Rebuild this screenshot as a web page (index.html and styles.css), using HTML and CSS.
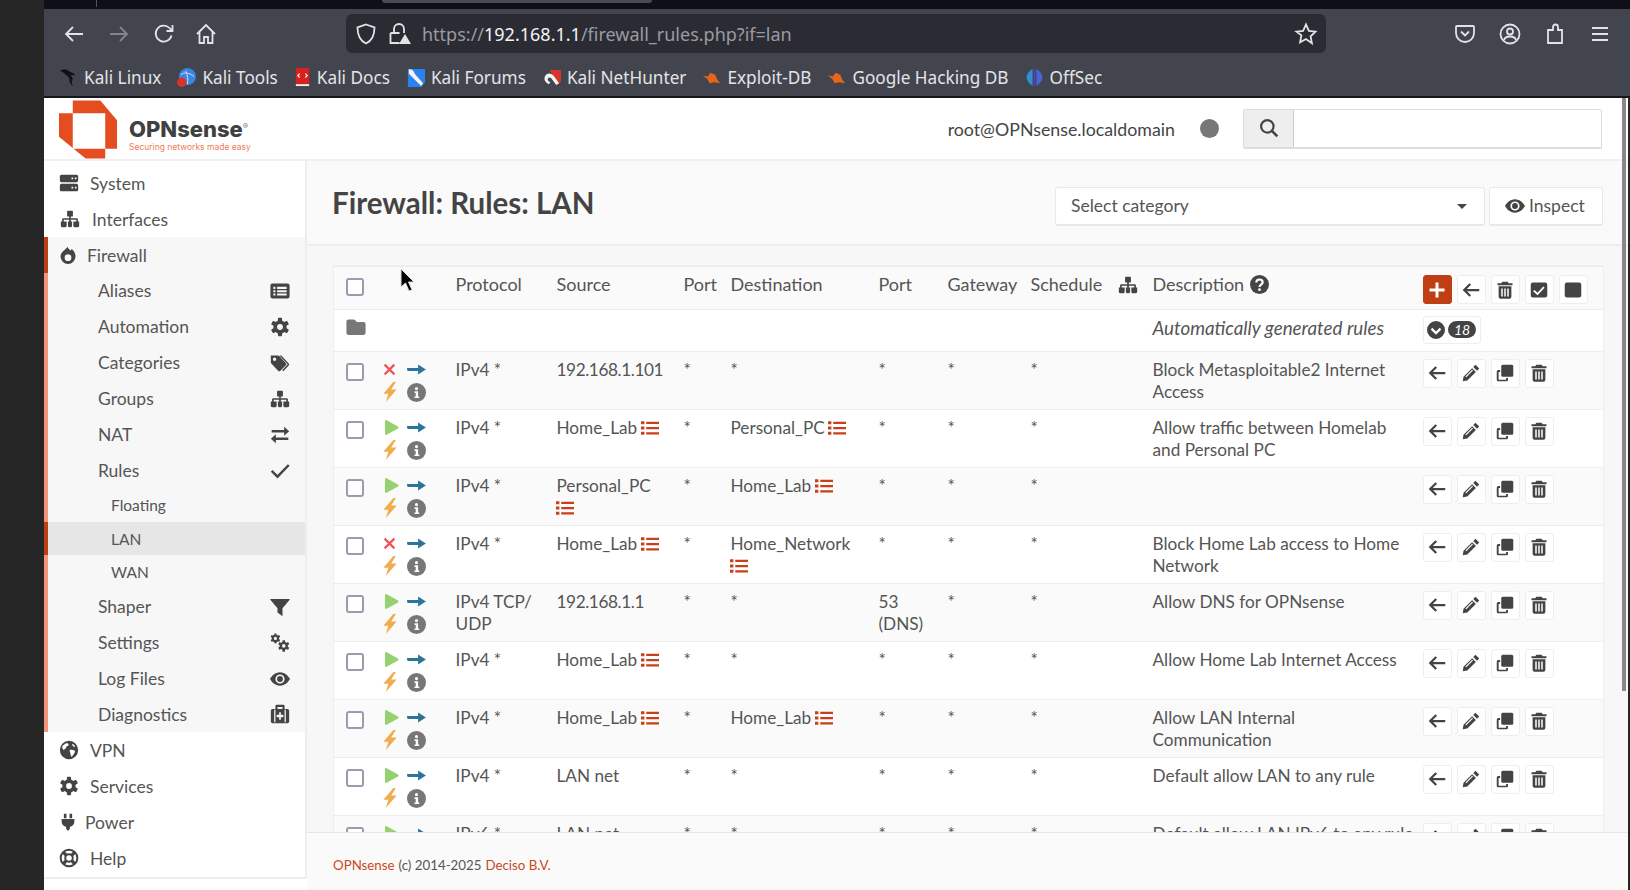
FILE: index.html
```html
<!DOCTYPE html>
<html lang="en">
<head>
  <meta charset="UTF-8">
  <title>Firewall: Rules: LAN</title>
  <link rel="stylesheet" href="styles.css">
</head>
<body>
  <!-- icon sprite -->
  <svg class="sprite" xmlns="http://www.w3.org/2000/svg">
    <symbol id="cog" viewBox="0 0 24 24">
      <path fill-rule="evenodd" d="M12 4a8 8 0 1 0 0 16a8 8 0 1 0 0-16zM12 8.500a3.500 3.500 0 1 1 0 7a3.500 3.500 0 1 1 0-7z"/>
      <rect x="9.500" y="1" width="5" height="5" rx="1"/><rect x="9.500" y="18" width="5" height="5" rx="1"/>
      <rect x="9.500" y="1" width="5" height="5" rx="1" transform="rotate(60 12 12)"/><rect x="9.500" y="18" width="5" height="5" rx="1" transform="rotate(60 12 12)"/>
      <rect x="9.500" y="1" width="5" height="5" rx="1" transform="rotate(120 12 12)"/><rect x="9.500" y="18" width="5" height="5" rx="1" transform="rotate(120 12 12)"/>
    </symbol>
    <symbol id="cogs" viewBox="0 0 24 24">
      <use href="#cog" x="0" y="0" width="13" height="13"/>
      <use href="#cog" x="9" y="8" width="15" height="15"/>
    </symbol>
    <symbol id="server" viewBox="0 0 24 24"><path fill-rule="evenodd" d="M3 2h18a2 2 0 0 1 2 2v5a2 2 0 0 1-2 2H3a2 2 0 0 1-2-2V4a2 2 0 0 1 2-2zM15 5.500v2h2v-2zM19 5.500v2h2v-2zM3 13h18a2 2 0 0 1 2 2v5a2 2 0 0 1-2 2H3a2 2 0 0 1-2-2v-5a2 2 0 0 1 2-2zM15 16.500v2h2v-2zM19 16.500v2h2v-2z"/></symbol>
    <symbol id="sitemap" viewBox="0 0 24 24"><path d="M9.500 2h5a1 1 0 0 1 1 1v5a1 1 0 0 1-1 1H13v2h7a1.500 1.500 0 0 1 1.500 1.500V15H23v5a2 2 0 0 1-2 2h-3a2 2 0 0 1-2-2v-5h3.500v-2H13v2h1.500v5a2 2 0 0 1-2 2h-1a2 2 0 0 1-2-2v-5H11v-2H4.500v2H8v5a2 2 0 0 1-2 2H3a2 2 0 0 1-2-2v-5h1.500v-2.500A1.500 1.500 0 0 1 4 11h7V9H9.500a1 1 0 0 1-1-1V3a1 1 0 0 1 1-1z"/></symbol>
    <symbol id="fire" viewBox="0 0 24 24"><path fill-rule="evenodd" d="M11 1c1.500 2.500 3 3.500 4.500 5l1.500-2c3 2.500 5 6 5 10a10 10 0 0 1-20 0c0-4.500 3-6.500 5-8.500 2-2 3.500-2.500 4-4.500zM12 11a4.500 4.500 0 1 0 0 9a4.500 4.500 0 1 0 0-9z"/></symbol>
    <symbol id="list-alt" viewBox="0 0 24 24"><path fill-rule="evenodd" d="M3 3h18a2.500 2.500 0 0 1 2.500 2.500v13a2.500 2.500 0 0 1-2.500 2.500H3a2.500 2.500 0 0 1-2.500-2.500v-13A2.500 2.500 0 0 1 3 3zM4 7v2.500h2.500V7zM8.500 7v2.500H20V7zM4 11v2.500h2.500V11zM8.500 11v2.500H20V11zM4 15v2.500h2.500V15zM8.500 15v2.500H20V15z"/></symbol>
    <symbol id="tags" viewBox="0 0 24 24"><path fill-rule="evenodd" d="M1 3h8.500a2 2 0 0 1 1.500.6l8 8.400a2 2 0 0 1 0 2.800l-6.500 6.500a2 2 0 0 1-2.800 0L1.600 12.500A2 2 0 0 1 1 11zM5.500 5.500a2 2 0 1 0 0 4a2 2 0 1 0 0-4z"/><path d="M13.500 3l9 9.500a2 2 0 0 1 0 2.500l-6.500 7-1.300-1.300 6-6.500c.4-.5.4-.8 0-1.300l-9.500-9.900z"/></symbol>
    <symbol id="exchange" viewBox="0 0 24 24"><path d="M17 2l6 5.500-6 5.500V9H2V6h15zM7 11v4h15v3H7v4l-6-5.500z"/></symbol>
    <symbol id="check" viewBox="0 0 24 24"><path d="M2 13l7 7L22.500 6" fill="none" stroke="currentColor" stroke-width="3"/></symbol>
    <symbol id="filter" viewBox="0 0 24 24"><path d="M1 2.500h22c.6 0 .8.700.4 1.200L15 13.500V23l-6-4.500v-5L.6 3.700C.2 3.200.4 2.500 1 2.500z"/></symbol>
    <symbol id="eye" viewBox="0 0 24 24"><path fill-rule="evenodd" d="M12 4C6 4 2 8.500 0 12c2 3.500 6 8 12 8s10-4.500 12-8c-2-3.500-6-8-12-8zM12 6.500a5.500 5.500 0 1 1 0 11a5.500 5.500 0 1 1 0-11zM12 8.500a3.500 3.500 0 1 0 0 7a3.500 3.500 0 1 0 0-7z"/></symbol>
    <symbol id="medkit" viewBox="0 0 24 24"><path fill-rule="evenodd" d="M8 1h8a1.500 1.500 0 0 1 1.500 1.500V6H21a2 2 0 0 1 2 2v13a2 2 0 0 1-2 2H3a2 2 0 0 1-2-2V8a2 2 0 0 1 2-2h3.500V2.500A1.500 1.500 0 0 1 8 1zM9 3.500V6h6V3.500zM5 7v15h1.500V7zM17.500 7v15H19V7zM11 10v3H8v3h3v3h2v-3h3v-3h-3v-3z"/></symbol>
    <symbol id="globe" viewBox="0 0 24 24"><path fill-rule="evenodd" d="M12 1a11 11 0 1 0 0 22a11 11 0 1 0 0-22zM4 7c2-1 3-3 6-3.500.5 1 2 1 1.500 2.500C11 7.500 9 7 8.500 9c-.5 1.500-2 2-3 3-1-1-2-3-1.500-5zM13 12c2-1 4 0 6 1 .5 1.500-.5 3-1.500 4s-1 2.500-2.500 3c-1-1-1-3-1.500-4.500S12.500 13 13 12zM16 4.500c1.500.5 3 2 3.500 3.500-1 .5-2.500 0-3-1s-1-2 -.5-2.500z"/></symbol>
    <symbol id="plug" viewBox="0 0 24 24"><path d="M6.500 1h3.500v6H6.500zM14 1h3.500v6H14zM3.500 8h17v3.500c0 3.500-2.500 6-6 6.800V21L12 24l-2.500-3v-2.700c-3.500-.8-6-3.300-6-6.800z"/></symbol>
    <symbol id="lifering" viewBox="0 0 24 24"><g fill="none" stroke="currentColor"><circle cx="12" cy="12" r="10" stroke-width="2.400"/><circle cx="12" cy="12" r="4.500" stroke-width="2.400"/><path d="M5 5l3.800 3.800M19 5l-3.800 3.800M5 19l3.800-3.800M19 19l-3.800-3.800" stroke-width="4"/></g></symbol>
    <symbol id="search" viewBox="0 0 24 24"><g fill="none" stroke="currentColor" stroke-width="2.600"><circle cx="10" cy="10" r="7.500"/><path d="M15.500 15.500L22 22" stroke-width="3.200"/></g></symbol>
    <symbol id="x" viewBox="0 0 24 24"><path d="M3 3l18 18M21 3L3 21" fill="none" stroke="currentColor" stroke-width="4"/></symbol>
    <symbol id="play" viewBox="0 0 24 24"><path d="M3 2.500c0-1.500 1.500-2 2.500-1.500l17 9.500c1.300.7 1.300 2.300 0 3L5.500 23C4.500 23.500 3 23 3 21.500z"/></symbol>
    <symbol id="arrow" viewBox="0 0 24 14"><path d="M0 5h14V.5L24 7l-10 6.500V9H2a2 2 0 0 1-2-2z"/></symbol>
    <symbol id="bolt" viewBox="0 0 16 24"><path d="M12 0L0 14h6L3 24 16 9H9.500L15 0z"/></symbol>
    <symbol id="info" viewBox="0 0 24 24"><path fill-rule="evenodd" d="M12 0a12 12 0 1 0 0 24a12 12 0 1 0 0-24zM12 5a2 2 0 1 1 0 4a2 2 0 1 1 0-4zM9.500 10.500H14v6.500h1.500v2h-6v-2H11v-4.500H9.500z"/></symbol>
    <symbol id="list" viewBox="0 0 24 24"><path d="M0 3h4.500v4H0zM7 3.500h17v3H7zM0 10h4.500v4H0zM7 10.500h17v3H7zM0 17h4.500v4H0zM7 17.500h17v3H7z"/></symbol>
    <symbol id="folder" viewBox="0 0 24 24"><path d="M3 3h6c1 0 1.500.5 2 1l2 2h8a2.500 2.500 0 0 1 2.500 2.500V19a2.500 2.500 0 0 1-2.500 2.500H3A2.500 2.500 0 0 1 .5 19V5.500A2.500 2.500 0 0 1 3 3z"/></symbol>
    <symbol id="back" viewBox="0 0 24 24"><path d="M23 12H4M11 4l-8 8 8 8" fill="none" stroke="currentColor" stroke-width="3"/></symbol>
    <symbol id="pencil" viewBox="0 0 24 24"><path d="M18 1l5 5-3 3-5-5zM13.500 5.500l5 5L7 22l-6 1 1-6zM4.500 16.500l1.200 1.200 9-9-1.200-1.200z" fill-rule="evenodd"/></symbol>
    <symbol id="clone" viewBox="0 0 24 24"><path d="M9 1h12a2 2 0 0 1 2 2v12a2 2 0 0 1-2 2H9a2 2 0 0 1-2-2V3a2 2 0 0 1 2-2z"/><path d="M5.500 8H3a2 2 0 0 0-2 2v11a2 2 0 0 0 2 2h11a2 2 0 0 0 2-2v-2.500h-2.500V21h-10V10.500h2z"/></symbol>
    <symbol id="trash" viewBox="0 0 24 24"><path fill-rule="evenodd" d="M8.500 1h7l1.500 2h5v2.500H2V3h5zM3.500 7h17v14a2.500 2.500 0 0 1-2.500 2.500H6A2.500 2.500 0 0 1 3.500 21zM7 10v10.500h2V10zM11 10v10.500h2V10zM15 10v10.500h2V10z"/></symbol>
    <symbol id="check-square" viewBox="0 0 24 24"><path fill-rule="evenodd" d="M4 2h16a3 3 0 0 1 3 3v14a3 3 0 0 1-3 3H4a3 3 0 0 1-3-3V5a3 3 0 0 1 3-3zM6 12l-1.800 1.800L10 19l9.500-10L17.700 7.300 10 15.500z"/></symbol>
    <symbol id="square" viewBox="0 0 24 24"><path d="M4 2h16a3 3 0 0 1 3 3v14a3 3 0 0 1-3 3H4a3 3 0 0 1-3-3V5a3 3 0 0 1 3-3z"/></symbol>
    <symbol id="plus" viewBox="0 0 24 24"><path d="M10 2h4v8h8v4h-8v8h-4v-8H2v-4h8z"/></symbol>
    <symbol id="chev-circle" viewBox="0 0 24 24"><path fill-rule="evenodd" d="M12 0a12 12 0 1 0 0 24a12 12 0 1 0 0-24zM7 9l5 5 5-5 2 2.200-7 7-7-7z"/></symbol>
    <symbol id="question" viewBox="0 0 24 24"><circle cx="12" cy="12" r="12"/><path d="M8 9.500c0-2.500 2-3.800 4-3.800s4 1.300 4 3.500c0 3-4 3-4 5.800" fill="none" stroke="#fff" stroke-width="2.800"/><circle cx="12" cy="18.500" r="1.800" fill="#fff"/></symbol>
    <symbol id="cursor" viewBox="0 0 14 24"><path d="M1 1v18l4.500-4 3.500 8 3-1.300-3.500-7.700h5.500z" fill="#000" stroke="#ddd" stroke-width="1"/></symbol>
  </svg>

  <div class="desk-edge"></div>

  <div class="window">
    <div class="tabstrip">
      <span class="tab-divider"></span>
      <span class="tab-sliver"></span>
    </div>

    <div class="toolbar">
      <svg class="tb-icon tb-back" viewBox="0 0 24 24"><path d="M21 12H4M11 5l-7 7 7 7"/></svg>
      <svg class="tb-icon tb-back tb-dim" viewBox="0 0 24 24"><path d="M3 12h17M13 5l7 7-7 7"/></svg>
      <svg class="tb-icon tb-reload" viewBox="0 0 24 24"><path d="M19.500 13.500a8 8 0 1 1-2-7.500L20 8.500M20.500 3v6h-6"/></svg>
      <svg class="tb-icon tb-home" viewBox="0 0 24 24"><path d="M3 12l9-9 9 9M5.500 10v11h4.500v-6h4v6h4.500V10"/></svg>
      <div class="urlbar">
        <svg class="tb-icon url-shield" viewBox="0 0 24 24"><path d="M12 2.500l8.500 3c0 8-2 13-8.500 16-6.500-3-8.500-8-8.500-16z"/></svg>
        <svg class="tb-icon url-lock" viewBox="0 0 24 24"><path d="M7 11V7a5 5 0 0 1 10 0v4M3.500 11h9M3.500 11v10h9"/><path class="warn" d="M18 12l6 10H12z"/></svg>
        <span class="url-text"><span class="url-dim">https://</span>192.168.1.1<span class="url-dim">/firewall_rules.php?if=lan</span></span>
        <svg class="tb-icon url-star" viewBox="0 0 24 24"><path d="M12 2.500l2.900 6.300 6.600.8-4.900 4.700 1.300 6.900L12 17l-5.900 3.200 1.300-6.900L2.500 9.600l6.600-.8z"/></svg>
      </div>
      <div class="tb-right">
        <svg class="tb-icon" viewBox="0 0 24 24"><path d="M4 4h16a1 1 0 0 1 1 1v6a9 9 0 0 1-18 0V5a1 1 0 0 1 1-1zM8 9.500l4 4 4-4"/></svg>
        <svg class="tb-icon" viewBox="0 0 24 24"><circle cx="12" cy="12" r="9.500"/><circle cx="12" cy="9.500" r="3"/><path d="M6 18c1-3 3-3.500 6-3.500s5 .5 6 3.500"/></svg>
        <svg class="tb-icon" viewBox="0 0 24 24"><path d="M5 21V8h5V5a2.500 2.500 0 0 1 5 0v3h4v13z"/></svg>
        <svg class="tb-icon" viewBox="0 0 24 24"><path d="M4 6h16M4 12h16M4 18h16"/></svg>
      </div>
    </div>

    <div class="bookmarks">
      <a class="bm"><svg class="bm-icon" viewBox="0 0 20 20"><path d="M1 3c3-2 7-2 9 0 2 2 6 2 7 5-2-1-4-1-5 0 2 1 3 3 2 5-1 1-1 3 1 6-3-2-4-4-4-7 0-2-2-4-4-5C5 5 3 4 1 3z" fill="#111"/></svg>Kali Linux</a>
      <a class="bm"><svg class="bm-icon" viewBox="0 0 20 20"><circle cx="11" cy="9" r="9" fill="#3a86e0"/><path d="M4 7c4-3 9-2 14 2M9 3c2 4 3 9 2 14" stroke="#cfe3fb" stroke-width="1" fill="none"/><circle cx="5" cy="15" r="5" fill="#d9342b"/></svg>Kali Tools</a>
      <a class="bm"><svg class="bm-icon bm-narrow" viewBox="0 0 16 20"><path d="M1 0h14v17H1z" fill="#d8211f"/><path d="M1 17h14v2H1z" fill="#eee"/><path d="M5 6L3 8l2 2M11 6l2 2-2 2" stroke="#fff" fill="none" stroke-width="1.200"/></svg>Kali Docs</a>
      <a class="bm"><svg class="bm-icon" viewBox="0 0 20 20"><path d="M2 1h18v14l-4 5H2z" fill="#2b82ee"/><path d="M3 1l4 1 3 5 8 9-2 3-8-8-5-5z" fill="#f3f3f3"/></svg>Kali Forums</a>
      <a class="bm"><svg class="bm-icon" viewBox="0 0 20 20"><path d="M8 2h12v12l-3 3z" fill="#d9342b"/><path d="M3 9c2-4 6-4 9-1l6 8-3 2-5-7c-2-2-4-1-4 1 0 1 1 2 3 3l-2 2C3 15 2 12 3 9z" fill="#f5f5f5"/></svg>Kali NetHunter</a>
      <a class="bm"><svg class="bm-icon" viewBox="0 0 20 20"><path d="M1 8l5 1 3-4 5 2 2 5 3 4-6-1-5 1-2-4z" fill="#e8641b"/></svg>Exploit-DB</a>
      <a class="bm"><svg class="bm-icon" viewBox="0 0 20 20"><path d="M1 8l5 1 3-4 5 2 2 5 3 4-6-1-5 1-2-4z" fill="#e8641b"/></svg>Google Hacking DB</a>
      <a class="bm"><svg class="bm-icon" viewBox="0 0 20 20"><path d="M8 1C3 4 1 8 2 12c1 3 4 5 6 7z" fill="#2e8fd8"/><path d="M12 1c5 3 7 7 6 11-1 3-4 5-6 7z" fill="#4368d8"/><path d="M10 2v17" stroke="#6a38c8" stroke-width="1.500"/></svg>OffSec</a>
    </div>

    <div class="page">
      <header class="topbar">
        <a class="logo">
          <svg class="logo-mark" viewBox="0 0 60 60"><path fill="#e44d1f" fill-rule="evenodd" d="M14 1h28l17 20v29H47v10H27L0 38V14h14zM14 14v36h33V14z"/></svg>
          <span class="logo-text">
            <span class="logo-name">OPNsense<sup>®</sup></span>
            <span class="logo-tag">Securing networks made easy</span>
          </span>
        </a>
        <div class="topbar-right">
          <span class="user">root@OPNsense.localdomain</span>
          <span class="status-dot"></span>
          <div class="search">
            <span class="search-btn"><svg class="ic"><use href="#search"/></svg></span>
            <span class="search-input"></span>
          </div>
        </div>
      </header>

      <div class="body-row">
        <nav class="sidebar">
          <a class="nav-item"><svg class="ic"><use href="#server"/></svg><span class="t-system">System</span></a>
          <a class="nav-item"><svg class="ic ic-wide"><use href="#sitemap"/></svg><span class="t-ifaces">Interfaces</span></a>
          <div class="nav-open">
            <a class="nav-item nav-head"><svg class="ic ic-small"><use href="#fire"/></svg><span class="t-fw">Firewall</span></a>
            <a class="sub-item">Aliases<svg class="ic"><use href="#list-alt"/></svg></a>
            <a class="sub-item">Automation<svg class="ic"><use href="#cog"/></svg></a>
            <a class="sub-item">Categories<svg class="ic"><use href="#tags"/></svg></a>
            <a class="sub-item">Groups<svg class="ic"><use href="#sitemap"/></svg></a>
            <a class="sub-item">NAT<svg class="ic"><use href="#exchange"/></svg></a>
            <a class="sub-item">Rules<svg class="ic"><use href="#check"/></svg></a>
            <a class="leaf-item">Floating</a>
            <a class="leaf-item active">LAN</a>
            <a class="leaf-item">WAN</a>
            <a class="sub-item">Shaper<svg class="ic"><use href="#filter"/></svg></a>
            <a class="sub-item">Settings<svg class="ic"><use href="#cogs"/></svg></a>
            <a class="sub-item">Log Files<svg class="ic"><use href="#eye"/></svg></a>
            <a class="sub-item">Diagnostics<svg class="ic"><use href="#medkit"/></svg></a>
          </div>
          <a class="nav-item"><svg class="ic"><use href="#globe"/></svg><span class="t-system">VPN</span></a>
          <a class="nav-item"><svg class="ic"><use href="#cog"/></svg><span class="t-system">Services</span></a>
          <a class="nav-item"><svg class="ic ic-small"><use href="#plug"/></svg><span class="t-pw">Power</span></a>
          <a class="nav-item"><svg class="ic"><use href="#lifering"/></svg><span class="t-system">Help</span></a>
        </nav>

        <main class="main">
          <div class="titlebar">
            <h1>Firewall: Rules: LAN</h1>
            <div class="title-tools">
              <div class="select">Select category<span class="caret"></span></div>
              <div class="inspect"><svg class="ic"><use href="#eye"/></svg>Inspect</div>
            </div>
          </div>

          <div class="content">
            <table class="rules">
              <colgroup>
                <col class="c-check"><col class="c-state"><col class="c-proto"><col class="c-src"><col class="c-port"><col class="c-dst"><col class="c-dport"><col class="c-gw"><col class="c-sched"><col class="c-tree"><col class="c-desc"><col class="c-act">
              </colgroup>
              <thead>
                <tr>
                  <td><span class="chk"></span></td><td></td>
                  <th>Protocol</th><th>Source</th><th>Port</th><th>Destination</th><th>Port</th><th>Gateway</th><th>Schedule</th>
                  <th><svg class="ic tree"><use href="#sitemap"/></svg></th>
                  <th>Description <svg class="ic help"><use href="#question"/></svg></th>
                  <td><div class="acts">
                    <span class="btn btn-add"><svg class="ic"><use href="#plus"/></svg></span>
                    <span class="btn"><svg class="ic"><use href="#back"/></svg></span>
                    <span class="btn"><svg class="ic"><use href="#trash"/></svg></span>
                    <span class="btn"><svg class="ic"><use href="#check-square"/></svg></span>
                    <span class="btn"><svg class="ic"><use href="#square"/></svg></span>
                  </div></td>
                </tr>
              </thead>
              <tbody>
                <tr class="group">
                  <td><svg class="ic folder"><use href="#folder"/></svg></td>
                  <td colspan="9"></td>
                  <td><em>Automatically generated rules</em></td>
                  <td><span class="btn btn-group"><svg class="ic"><use href="#chev-circle"/></svg><span class="badge">18</span></span></td>
                </tr>
                <tr>
                  <td><span class="chk"></span></td>
                  <td><div class="state"><svg class="s-x"><use href="#x"/></svg><svg class="s-arrow"><use href="#arrow"/></svg><svg class="s-bolt"><use href="#bolt"/></svg><svg class="s-info"><use href="#info"/></svg></div></td>
                  <td>IPv4 *</td><td class="num">192.168.1.101</td><td>*</td><td>*</td><td>*</td><td>*</td><td>*</td><td></td>
                  <td>Block Metasploitable2 Internet<br>Access</td>
                  <td><div class="acts"><span class="btn"><svg class="ic"><use href="#back"/></svg></span><span class="btn"><svg class="ic"><use href="#pencil"/></svg></span><span class="btn"><svg class="ic"><use href="#clone"/></svg></span><span class="btn"><svg class="ic"><use href="#trash"/></svg></span></div></td>
                </tr>
                <tr>
                  <td><span class="chk"></span></td>
                  <td><div class="state"><svg class="s-play"><use href="#play"/></svg><svg class="s-arrow"><use href="#arrow"/></svg><svg class="s-bolt"><use href="#bolt"/></svg><svg class="s-info"><use href="#info"/></svg></div></td>
                  <td>IPv4 *</td><td>Home_Lab <svg class="alias"><use href="#list"/></svg></td><td>*</td><td>Personal_PC <svg class="alias"><use href="#list"/></svg></td><td>*</td><td>*</td><td>*</td><td></td>
                  <td>Allow traffic between Homelab<br>and Personal PC</td>
                  <td><div class="acts"><span class="btn"><svg class="ic"><use href="#back"/></svg></span><span class="btn"><svg class="ic"><use href="#pencil"/></svg></span><span class="btn"><svg class="ic"><use href="#clone"/></svg></span><span class="btn"><svg class="ic"><use href="#trash"/></svg></span></div></td>
                </tr>
                <tr>
                  <td><span class="chk"></span></td>
                  <td><div class="state"><svg class="s-play"><use href="#play"/></svg><svg class="s-arrow"><use href="#arrow"/></svg><svg class="s-bolt"><use href="#bolt"/></svg><svg class="s-info"><use href="#info"/></svg></div></td>
                  <td>IPv4 *</td><td>Personal_PC<br><svg class="alias"><use href="#list"/></svg></td><td>*</td><td>Home_Lab <svg class="alias"><use href="#list"/></svg></td><td>*</td><td>*</td><td>*</td><td></td>
                  <td></td>
                  <td><div class="acts"><span class="btn"><svg class="ic"><use href="#back"/></svg></span><span class="btn"><svg class="ic"><use href="#pencil"/></svg></span><span class="btn"><svg class="ic"><use href="#clone"/></svg></span><span class="btn"><svg class="ic"><use href="#trash"/></svg></span></div></td>
                </tr>
                <tr>
                  <td><span class="chk"></span></td>
                  <td><div class="state"><svg class="s-x"><use href="#x"/></svg><svg class="s-arrow"><use href="#arrow"/></svg><svg class="s-bolt"><use href="#bolt"/></svg><svg class="s-info"><use href="#info"/></svg></div></td>
                  <td>IPv4 *</td><td>Home_Lab <svg class="alias"><use href="#list"/></svg></td><td>*</td><td>Home_Network<br><svg class="alias"><use href="#list"/></svg></td><td>*</td><td>*</td><td>*</td><td></td>
                  <td>Block Home Lab access to Home<br>Network</td>
                  <td><div class="acts"><span class="btn"><svg class="ic"><use href="#back"/></svg></span><span class="btn"><svg class="ic"><use href="#pencil"/></svg></span><span class="btn"><svg class="ic"><use href="#clone"/></svg></span><span class="btn"><svg class="ic"><use href="#trash"/></svg></span></div></td>
                </tr>
                <tr>
                  <td><span class="chk"></span></td>
                  <td><div class="state"><svg class="s-play"><use href="#play"/></svg><svg class="s-arrow"><use href="#arrow"/></svg><svg class="s-bolt"><use href="#bolt"/></svg><svg class="s-info"><use href="#info"/></svg></div></td>
                  <td>IPv4 TCP/<br>UDP</td><td class="num">192.168.1.1</td><td>*</td><td>*</td><td>53<br>(DNS)</td><td>*</td><td>*</td><td></td>
                  <td>Allow DNS for OPNsense</td>
                  <td><div class="acts"><span class="btn"><svg class="ic"><use href="#back"/></svg></span><span class="btn"><svg class="ic"><use href="#pencil"/></svg></span><span class="btn"><svg class="ic"><use href="#clone"/></svg></span><span class="btn"><svg class="ic"><use href="#trash"/></svg></span></div></td>
                </tr>
                <tr>
                  <td><span class="chk"></span></td>
                  <td><div class="state"><svg class="s-play"><use href="#play"/></svg><svg class="s-arrow"><use href="#arrow"/></svg><svg class="s-bolt"><use href="#bolt"/></svg><svg class="s-info"><use href="#info"/></svg></div></td>
                  <td>IPv4 *</td><td>Home_Lab <svg class="alias"><use href="#list"/></svg></td><td>*</td><td>*</td><td>*</td><td>*</td><td>*</td><td></td>
                  <td>Allow Home Lab Internet Access</td>
                  <td><div class="acts"><span class="btn"><svg class="ic"><use href="#back"/></svg></span><span class="btn"><svg class="ic"><use href="#pencil"/></svg></span><span class="btn"><svg class="ic"><use href="#clone"/></svg></span><span class="btn"><svg class="ic"><use href="#trash"/></svg></span></div></td>
                </tr>
                <tr>
                  <td><span class="chk"></span></td>
                  <td><div class="state"><svg class="s-play"><use href="#play"/></svg><svg class="s-arrow"><use href="#arrow"/></svg><svg class="s-bolt"><use href="#bolt"/></svg><svg class="s-info"><use href="#info"/></svg></div></td>
                  <td>IPv4 *</td><td>Home_Lab <svg class="alias"><use href="#list"/></svg></td><td>*</td><td>Home_Lab <svg class="alias"><use href="#list"/></svg></td><td>*</td><td>*</td><td>*</td><td></td>
                  <td>Allow LAN Internal<br>Communication</td>
                  <td><div class="acts"><span class="btn"><svg class="ic"><use href="#back"/></svg></span><span class="btn"><svg class="ic"><use href="#pencil"/></svg></span><span class="btn"><svg class="ic"><use href="#clone"/></svg></span><span class="btn"><svg class="ic"><use href="#trash"/></svg></span></div></td>
                </tr>
                <tr>
                  <td><span class="chk"></span></td>
                  <td><div class="state"><svg class="s-play"><use href="#play"/></svg><svg class="s-arrow"><use href="#arrow"/></svg><svg class="s-bolt"><use href="#bolt"/></svg><svg class="s-info"><use href="#info"/></svg></div></td>
                  <td>IPv4 *</td><td>LAN net</td><td>*</td><td>*</td><td>*</td><td>*</td><td>*</td><td></td>
                  <td>Default allow LAN to any rule</td>
                  <td><div class="acts"><span class="btn"><svg class="ic"><use href="#back"/></svg></span><span class="btn"><svg class="ic"><use href="#pencil"/></svg></span><span class="btn"><svg class="ic"><use href="#clone"/></svg></span><span class="btn"><svg class="ic"><use href="#trash"/></svg></span></div></td>
                </tr>
                <tr>
                  <td><span class="chk"></span></td>
                  <td><div class="state"><svg class="s-play"><use href="#play"/></svg><svg class="s-arrow"><use href="#arrow"/></svg><svg class="s-bolt"><use href="#bolt"/></svg><svg class="s-info"><use href="#info"/></svg></div></td>
                  <td>IPv6 *</td><td>LAN net</td><td>*</td><td>*</td><td>*</td><td>*</td><td>*</td><td></td>
                  <td>Default allow LAN IPv6 to any rule</td>
                  <td><div class="acts"><span class="btn"><svg class="ic"><use href="#back"/></svg></span><span class="btn"><svg class="ic"><use href="#pencil"/></svg></span><span class="btn"><svg class="ic"><use href="#clone"/></svg></span><span class="btn"><svg class="ic"><use href="#trash"/></svg></span></div></td>
                </tr>
              </tbody>
            </table>
          </div>

          <footer class="foot"><a>OPNsense</a> (c) 2014-2025 <a>Deciso B.V.</a></footer>
        </main>
      </div>

      <!-- page scrollbar and mouse pointer sit over the page -->
      <span class="scroll-thumb"></span>
      <svg class="pointer"><use href="#cursor"/></svg>
    </div>
  </div>
</body>
</html>
```

FILE: styles.css
```css
* {
  box-sizing: border-box;
}

html, body {
  height: 100%;
}

body {
  margin: 0;
  display: flex;
  overflow: hidden;
  background-color: #262626;
  font-family: Lato, "Noto Sans", sans-serif;
  color: #555;
}

.sprite {
  position: absolute;
  width: 0;
  height: 0;
}

.desk-edge {
  flex: 0 0 44px;
}

.window {
  flex: 1;
  min-width: 0;
  display: flex;
  flex-direction: column;
}

/* browser chrome */
.tabstrip {
  position: relative;
  flex: 0 0 9px;
  background-color: #0f1017;
}

.tab-divider {
  position: absolute;
  left: 52px;
  top: 0;
  width: 1px;
  height: 7px;
  background-color: #555;
}

.tab-sliver {
  position: absolute;
  left: 338px;
  top: 0;
  width: 270px;
  height: 3px;
  background-color: #4a4b52;
  border-radius: 0 0 4px 4px;
}

.toolbar {
  flex: 0 0 49px;
  display: flex;
  align-items: center;
  padding: 0 0 0 18px;
  background-color: #42454e;
}

.tb-icon {
  flex: 0 0 24px;
  width: 24px;
  height: 24px;
  fill: none;
  stroke: #e3e3e6;
  stroke-width: 1.8;
}

.tb-back {
  margin-right: 21px;
}

.tb-dim {
  stroke: #83858c;
}

.tb-reload {
  margin-right: 18px;
}

.urlbar {
  flex: 0 0 980px;
  height: 39px;
  margin-left: 128px;
  display: flex;
  align-items: center;
  padding: 0 8px 0 8px;
  background-color: #2b2c33;
  border-radius: 6px;
  font-family: "Noto Sans", sans-serif;
  font-size: 18px;
  color: #f3f3f5;
}

.url-shield {
  margin-right: 9px;
}

.url-lock .warn {
  fill: #e3e3e6;
  stroke: none;
}

.url-text {
  flex: 1;
  margin-left: 11px;
}

.url-dim {
  color: #9a9ba2;
}

.tb-right {
  display: flex;
  gap: 21px;
  margin-left: 127px;
}

.bookmarks {
  flex: 0 0 40px;
  display: flex;
  align-items: center;
  gap: 16px;
  padding: 0 0 0 15px;
  background-color: #42454e;
  border-bottom: 2px solid #16171c;
  font-family: "Noto Sans", sans-serif;
  font-size: 17.200px;
  color: #e4e4e7;
}

.bm {
  display: flex;
  align-items: center;
  gap: 6px;
}

.bm-icon {
  width: 19px;
  height: 19px;
}

.bm-narrow {
  width: 17px;
}

/* opnsense page */
.page {
  position: relative;
  flex: 1;
  min-height: 0;
  display: flex;
  flex-direction: column;
  background-color: #fff;
  border-right: 2px solid #262626;
}

.ic {
  width: 20px;
  height: 20px;
  fill: currentColor;
  flex: none;
}

.topbar {
  flex: 0 0 63px;
  display: flex;
  align-items: center;
  justify-content: space-between;
  padding: 0 26px 0 15px;
  border-bottom: 2px solid #f0f0f0;
}

.logo {
  display: flex;
  align-items: center;
  gap: 11px;
}

.logo-mark {
  width: 59px;
  height: 60px;
}

.logo-text {
  display: flex;
  flex-direction: column;
  padding-top: 12px;
}

.logo-name {
  font-family: Inter, sans-serif;
  font-weight: 800;
  font-size: 22px;
  line-height: 25px;
  color: #404040;
}

.logo-name sup {
  font-size: 8px;
  font-weight: 400;
  line-height: 0;
  color: #777;
}

.logo-tag {
  font-family: Inter, sans-serif;
  font-size: 8.500px;
  line-height: 10px;
  color: #ef7c5b;
  white-space: nowrap;
}

.topbar-right {
  display: flex;
  align-items: center;
}

.user {
  font-size: 17.800px;
  color: #444;
}

.status-dot {
  width: 19px;
  height: 19px;
  margin: 0 24px 0 25px;
  border-radius: 50%;
  background-color: #777;
}

.search {
  display: flex;
  width: 359px;
  height: 40px;
  border: 1px solid #ddd;
  border-bottom-width: 2px;
  border-radius: 2px;
}

.search-btn {
  flex: 0 0 50px;
  display: flex;
  align-items: center;
  justify-content: center;
  background-color: #eee;
  border-right: 1px solid #ccc;
  color: #444;
}

.search-input {
  flex: 1;
}

.body-row {
  flex: 1;
  min-height: 0;
  display: flex;
}

.sidebar {
  flex: 0 0 263px;
  height: 718px;
  display: flex;
  flex-direction: column;
  padding-top: 4px;
  border-right: 2px solid #eee;
  border-bottom: 2px solid #eee;
  font-size: 17.500px;
  color: #555;
}

.nav-item {
  height: 36px;
  flex: none;
  display: flex;
  align-items: center;
  padding-left: 15px;
}

.nav-item .ic {
  color: #444;
}

.ic-wide {
  width: 22px;
}

.ic-small {
  width: 18px;
}

.t-system {
  margin-left: 11px;
}

.t-ifaces {
  margin-left: 11px;
}

.t-fw {
  margin-left: 10px;
}

.t-pw {
  margin-left: 8px;
}

.nav-open {
  flex: none;
  background-color: #f7f7f7;
  border-left: 4px solid #f3957a;
}

.nav-head {
  margin-left: -4px;
  padding-left: 11px;
  border-left: 4px solid #c03e14;
}

.sub-item {
  height: 35.900px;
  display: flex;
  align-items: center;
  justify-content: space-between;
  padding: 0 15px 0 50px;
}

.sub-item .ic {
  color: #444;
}

.leaf-item {
  height: 33.500px;
  display: flex;
  align-items: center;
  padding-left: 63px;
  font-size: 15.500px;
}

.leaf-item.active {
  margin-left: -4px;
  background-color: #e6e6e6;
  border-left: 4px solid #c03e14;
}

.main {
  flex: 1;
  min-width: 0;
  display: flex;
  flex-direction: column;
  background-color: #f7f7f7;
}

.titlebar {
  flex: 0 0 85px;
  display: flex;
  align-items: center;
  justify-content: space-between;
  padding: 0 25px 0 25px;
  background-color: #fafafa;
  border-bottom: 2px solid #eee;
}

.titlebar h1 {
  margin: 0;
  font-size: 29.500px;
  font-weight: 700;
  color: #444;
}

.title-tools {
  display: flex;
  gap: 4px;
  padding-top: 7px;
}

.select, .inspect {
  height: 39px;
  display: flex;
  align-items: center;
  background-color: #fff;
  border: 1px solid #e8e8e8;
  border-bottom-width: 2px;
  border-radius: 3px;
  font-size: 17.500px;
}

.select {
  position: relative;
  width: 430px;
  padding-left: 15px;
}

.caret {
  position: absolute;
  right: 17px;
  top: 16px;
  border: 5px solid transparent;
  border-top: 5px solid #444;
}

.inspect {
  width: 114px;
  gap: 4px;
  padding-left: 15px;
}

.inspect .ic {
  color: #444;
}

.content {
  flex: 1;
  min-height: 0;
  overflow: hidden;
  padding: 19px 0 0 26px;
}

.rules {
  width: 1270px;
  table-layout: fixed;
  border-collapse: collapse;
  background-color: #fff;
  border-top: 2px solid #eee;
  border-left: 1px solid #eee;
  border-right: 1px solid #eee;
  font-size: 17.200px;
  line-height: 22.300px;
}

.c-check { width: 37px; }
.c-state { width: 85px; }
.c-proto { width: 101px; }
.c-src { width: 127px; }
.c-port { width: 47px; }
.c-dst { width: 148px; }
.c-dport { width: 69px; }
.c-gw { width: 83px; }
.c-sched { width: 88px; }
.c-tree { width: 34px; }
.c-desc { width: 271px; }
.c-act { width: 180px; }

.rules th, .rules td {
  padding: 7px 0 0 0;
  vertical-align: top;
  text-align: left;
  font-weight: 400;
  white-space: nowrap;
}

.rules thead tr {
  height: 43px;
  background-color: #fafafa;
}

.rules thead th {
  padding-top: 6px;
  font-size: 18px;
}

.rules tbody tr {
  height: 58px;
  border-top: 1px solid #eee;
}

.rules tbody tr:nth-child(even) {
  background-color: #fafafa;
}

.rules tr.group {
  height: 42px;
}

.rules td:first-child {
  padding-left: 12px;
}

.rules td.num {
  letter-spacing: -0.4px;
}

.group em {
  font-size: 18.800px;
  color: #555;
}

.folder {
  color: #777;
}

.chk {
  display: block;
  width: 18px;
  height: 18px;
  margin-top: 4px;
  background-color: #fff;
  border: 2px solid #9b9bb0;
  border-radius: 3px;
}

.state {
  display: grid;
  grid-template-columns: 24px 20px;
  grid-auto-rows: 22.500px;
  align-items: center;
  justify-items: center;
  margin-left: 12px;
  width: 44px;
}

.s-x {
  justify-self: start;
  width: 13px;
  height: 13px;
  color: #f0525a;
  fill: currentColor;
}

.s-play {
  justify-self: start;
  width: 16px;
  height: 17px;
  fill: #95d26f;
}

.s-arrow {
  width: 19px;
  height: 11px;
  fill: #2d7598;
}

.s-bolt {
  justify-self: start;
  width: 14px;
  height: 20px;
  fill: #f0ad4e;
}

.s-info {
  width: 19px;
  height: 19px;
  fill: #777;
}

.alias {
  width: 18px;
  height: 18px;
  margin-left: -1px;
  vertical-align: -3px;
  fill: #c8401a;
}

.tree {
  width: 22px;
  height: 20px;
  color: #444;
  vertical-align: -4px;
  margin-left: -2px;
}

.help {
  width: 19px;
  height: 19px;
  color: #444;
  vertical-align: -3px;
  margin-left: 1px;
}

.acts {
  display: flex;
  gap: 5px;
  margin-left: -1px;
}

.btn {
  flex: 0 0 auto;
  width: 29px;
  height: 29px;
  display: inline-flex;
  align-items: center;
  justify-content: center;
  background-color: #fff;
  border: 1px solid #eee;
  border-radius: 3px;
  color: #444;
}

.btn .ic {
  width: 18px;
  height: 18px;
}

thead .acts {
  padding-top: 1px;
}

.btn-add {
  background-color: #c03e14;
  border-color: #c03e14;
  color: #fff;
}

.btn-group {
  width: 58px;
  height: 28px;
  gap: 3px;
  margin-top: -1px;
  margin-left: -1px;
}

.badge {
  padding: 0 6px;
  height: 17px;
  background-color: #444;
  border-radius: 9px;
  font-size: 14px;
  font-style: italic;
  line-height: 17px;
  color: #fff;
}

.foot {
  flex: 0 0 58px;
  display: flex;
  align-items: center;
  gap: 4px;
  padding-left: 26px;
  padding-top: 6px;
  background-color: #fafafa;
  border-top: 1px solid #e5e5e5;
  font-size: 13.300px;
  position: relative;
}

.foot a {
  color: #c8491f;
}

.scroll-thumb {
  position: absolute;
  top: 0;
  right: 2px;
  width: 4px;
  height: 593px;
  background-color: #888;
}

.pointer {
  position: absolute;
  left: 356px;
  top: 170px;
  width: 14px;
  height: 24px;
}
```
